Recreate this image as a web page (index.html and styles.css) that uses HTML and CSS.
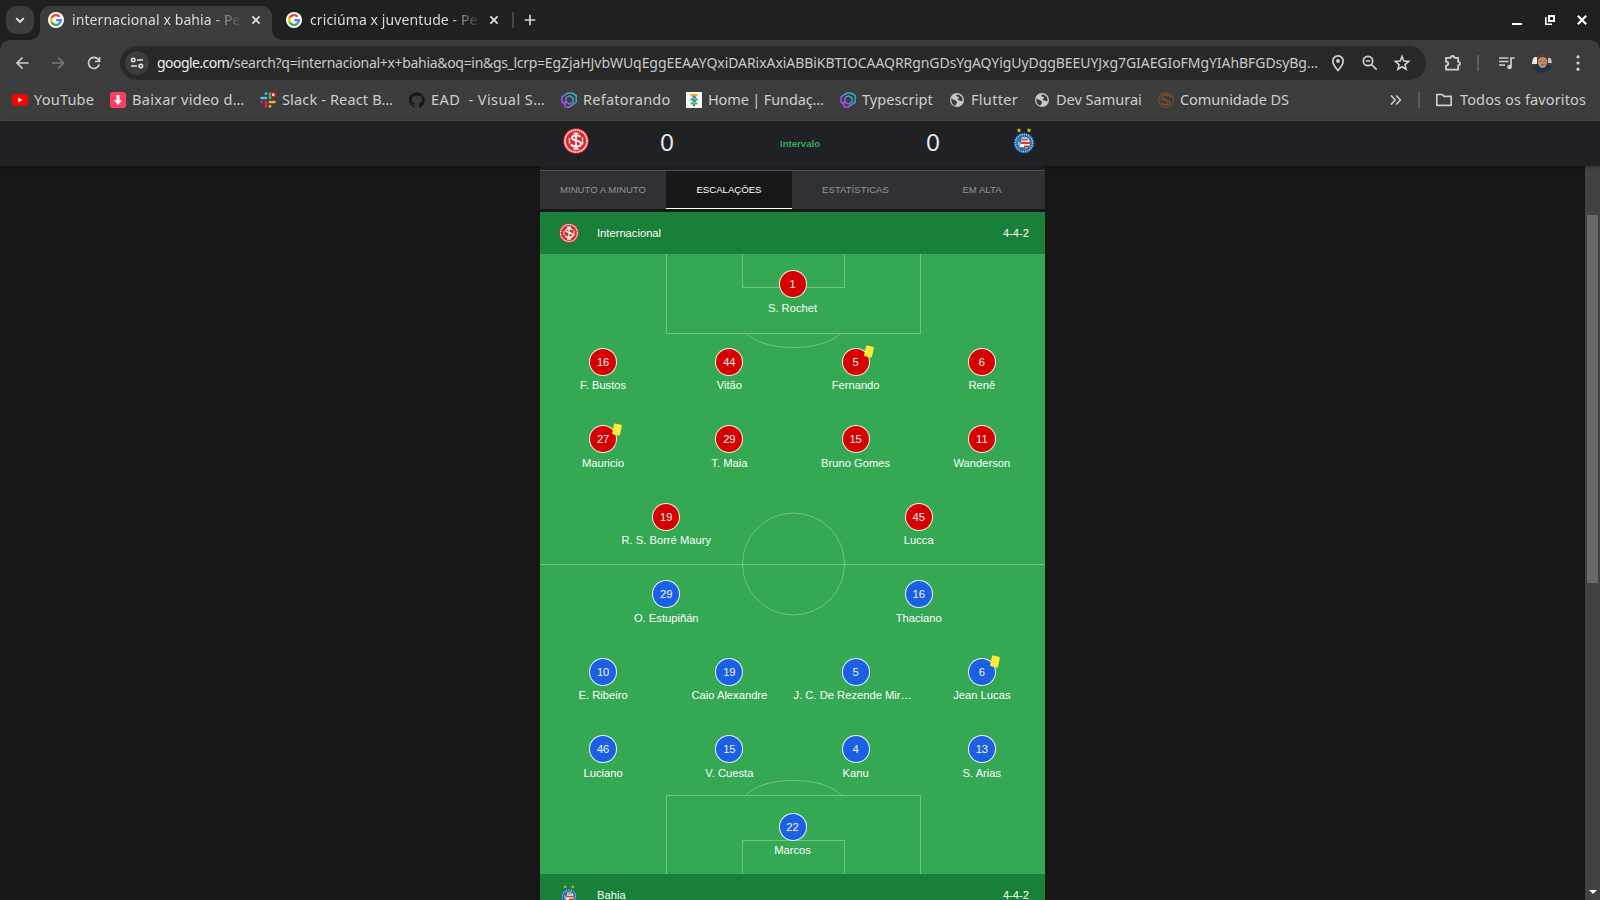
FILE: index.html
```html
<!DOCTYPE html>
<html lang="pt-BR">
<head>
<meta charset="utf-8">
<title>internacional x bahia</title>
<link rel="stylesheet" href="styles.css">
</head>
<body>
<svg class="defs" width="0" height="0">
  <symbol id="google" viewBox="0 0 16 16"><circle cx="8" cy="8" r="8" fill="#fff"/><g fill="none" stroke-width="2.3"><path d="M11.6 4.7A4.9 4.9 0 0 0 3.6 5.8" stroke="#ea4335"/><path d="M3.6 5.8a4.9 4.9 0 0 0 0 4.4" stroke="#fbbc05"/><path d="M3.6 10.2a4.9 4.9 0 0 0 7.7 1.4" stroke="#34a853"/><path d="M11.3 11.6A4.8 4.8 0 0 0 12.9 8.1H8.2" stroke="#4285f4"/></g></symbol>
  <symbol id="close" viewBox="0 0 16 16"><path d="M4.4 4.4l7.2 7.2M11.6 4.4l-7.2 7.2" stroke="currentColor" stroke-width="1.8" fill="none"/></symbol>
  <symbol id="hex" viewBox="0 0 16 16"><linearGradient id="hg" x1="1" y1="0" x2="0" y2="1"><stop offset="0" stop-color="#10c8b8"/><stop offset=".5" stop-color="#5a86dc"/><stop offset="1" stop-color="#d032f0"/></linearGradient><g fill="none" stroke="url(#hg)" stroke-width="1.5" stroke-linejoin="round"><path d="M4 12.2L1 10.300V4.800L7 1h4l4.200 2.600v6.600L11 13.400"/><path d="M5 5.600l3.500-1.700 3.500 2v4.200l-3.500 2-3.500-2z"/><path d="M4 9v5.800l4 .5 3-2.500"/></g></symbol>
  <symbol id="globe" viewBox="0 0 16 16"><circle cx="8" cy="8" r="7" fill="#c4c7c9"/><path d="M2.500 6.200c1.500 2 3.200 1 4 2.200s1.500.6 1.500 2-1.500 1-1.500 3.400C3.500 13 1.800 10 2.500 6.200zM7.500 2.600c-.5 1.800 1 2.600 2.400 2.200.6 1.800-2 2.400-.6 3.400 2 0 2.400 1.200 4.200.8.600-3-1.500-6.300-6-6.400z" fill="#3c3c3c"/></symbol>
  <symbol id="inter" viewBox="0 0 26 26"><circle cx="13" cy="13" r="12.700" fill="#e8262d"/><circle cx="13" cy="13" r="11" fill="none" stroke="#fff" stroke-width="1.600" stroke-dasharray="1.500 .6"/><circle cx="13" cy="13" r="9.300" fill="#e5232b"/><g fill="none" stroke="#fff"><path d="M13 4.500v17M10.500 5.500h5M10.500 20.800h5" stroke-width="1.700"/><path d="M17.500 9c-1-2-8.500-2.300-8.500.8 0 3.600 9 2 9 6 0 3.800-8.500 3.500-10 .5" stroke-width="2"/><path d="M6.500 10v5.500M19.500 9.500v7" stroke-width="1.400"/></g></symbol>
  <symbol id="bahia" viewBox="0 0 22 26"><path d="M6 0l.7 1.600h1.700L7.100 2.700l.5 1.800L6 3.500l-1.600 1 .5-1.800L3.600 1.600h1.700zM16 0l.7 1.600h1.700l-1.300 1.100.5 1.800-1.600-1-1.600 1 .5-1.800-1.300-1.100h1.700z" fill="#f6b52c"/><circle cx="11" cy="15" r="10.300" fill="#1764a5"/><circle cx="11" cy="15" r="8.500" fill="none" stroke="#b9d4e8" stroke-width="1.500" stroke-dasharray="1.200 1"/><circle cx="11" cy="15" r="6.500" fill="#7fb0d2"/><path d="M8.500 10.500h7l1.500 8.500H7z" fill="#fff"/><path d="M9 11h6v1.400H9zM7.500 14h9.500v2H7.500zM11 17.600h6v1.800h-6z" fill="#e1392e"/><path d="M5.500 10h3v4h-3zM7 19.500h5V21H7z" fill="#2871ad"/></symbol>
</svg>

<header class="tabstrip">
  <div class="tabsearch"><svg width="16" height="16" viewBox="0 0 16 16"><path d="M4.200 6.200L8 10l3.800-3.800" fill="none" stroke="#e8e8e8" stroke-width="1.900"/></svg></div>
  <div class="tab tab-active"><svg class="ic16"><use href="#google"/></svg><span class="tab-title">internacional x bahia - Pe</span><svg class="ic16 x"><use href="#close"/></svg></div>
  <div class="tab"><svg class="ic16"><use href="#google"/></svg><span class="tab-title">criciúma x juventude - Pe</span><svg class="ic16 x"><use href="#close"/></svg></div>
  <i class="tab-sep"></i>
  <svg class="newtab" width="16" height="16" viewBox="0 0 16 16"><path d="M8 2.700v10.600M2.700 8h10.600" stroke="#d2d2d2" stroke-width="1.700"/></svg>
  <div class="winctl">
    <svg width="12" height="16" viewBox="0 0 12 16"><path d="M1 12h10" stroke="#fff" stroke-width="2"/></svg>
    <svg width="12" height="16" viewBox="0 0 12 16"><path d="M5 4h5v5H5z" fill="none" stroke="#fff" stroke-width="2"/><path d="M1.800 5v7.200H8" fill="none" stroke="#fff" stroke-width="1.600"/></svg>
    <svg width="12" height="16" viewBox="0 0 12 16"><path d="M1.800 3.800l8.400 8.400M10.200 3.800l-8.400 8.400" stroke="#fff" stroke-width="2.200"/></svg>
  </div>
</header>

<nav class="toolbar">
  <div class="navbtns">
    <svg width="20" height="20" viewBox="0 0 20 20"><path d="M16.500 10H5.500M10.500 4.500L5 10l5.500 5.500" fill="none" stroke="#d0d0d0" stroke-width="1.700"/></svg>
    <svg width="20" height="20" viewBox="0 0 20 20"><path d="M4 10h11M10 4.500l5.500 5.500-5.500 5.500" fill="none" stroke="#777" stroke-width="1.700"/></svg>
    <svg width="20" height="20" viewBox="0 0 20 20"><path d="M15.200 11.500A5.500 5.500 0 1 1 14.200 6.500L15.300 8" fill="none" stroke="#d0d0d0" stroke-width="1.700"/><path d="M15.500 4v4.500H11" fill="none" stroke="#d0d0d0" stroke-width="1.700"/></svg>
  </div>
  <div class="omnibox">
    <span class="tune"><svg width="16" height="16" viewBox="0 0 16 16"><g fill="none" stroke="#e3e3e3" stroke-width="1.600"><circle cx="4.200" cy="5" r="1.700"/><path d="M8 5h6M2 11h6"/><circle cx="11.800" cy="11" r="1.700"/></g></svg></span>
    <span class="url"><span class="host">google.com</span><span class="path">/search?q=internacional+x+bahia&amp;oq=in&amp;gs_lcrp=</span>EgZjaHJvbWUqEggEEAAYQxiDARixAxiABBiKBTIOCAAQRRgnGDsYgAQYigUyDggBEEUYJxg7GIAEGIoFMgYIAhBFGDsyBg…</span>
    <span class="omni-icons">
      <svg width="20" height="20" viewBox="0 0 20 20"><path d="M10 17.500C6.500 13.500 4.800 11 4.800 8a5.200 5.200 0 0 1 10.400 0c0 3-1.700 5.500-5.200 9.500z" fill="none" stroke="#d0d0d0" stroke-width="1.700"/><circle cx="10" cy="8" r="1.900" fill="#d0d0d0"/></svg>
      <svg width="20" height="20" viewBox="0 0 20 20"><circle cx="8" cy="8" r="4.700" fill="none" stroke="#d0d0d0" stroke-width="1.700"/><path d="M11.500 11.500l5.200 5.200M5.800 8h4.400" stroke="#d0d0d0" stroke-width="1.700"/></svg>
      <svg width="20" height="20" viewBox="0 0 20 20"><path d="M10 3.500l1.800 4.500 4.900.4-3.700 3.200 1.100 4.700L10 13.800l-4.100 2.500L7 11.600 3.300 8.400 8.200 8z" fill="none" stroke="#d0d0d0" stroke-width="1.600"/></svg>
    </span>
  </div>
  <div class="actions">
    <svg class="a1" width="20" height="20" viewBox="0 0 20 20"><path d="M3 4.800h4.700c0-2.400 3.600-2.400 3.600 0H15.200v4c2.300 0 2.300 3.600 0 3.600v4.300H3v-4c3-.4 3-3.700 0-4z" fill="none" stroke="#d0d0d0" stroke-width="1.800" stroke-linejoin="round"/></svg>
    <i class="vsep"></i>
    <svg class="a2" width="20" height="20" viewBox="0 0 20 20"><path d="M2 5h9.500M2 8.500h9.500M2 12h6M14 14V5h3.500" fill="none" stroke="#d0d0d0" stroke-width="1.700"/><circle cx="12.500" cy="14" r="2.300" fill="#d0d0d0"/></svg>
    <svg class="a3" width="20" height="20" viewBox="0 0 20 20"><clipPath id="av"><circle cx="10" cy="10" r="10"/></clipPath><g clip-path="url(#av)"><path d="M0 0h20v20H0z" fill="#4a3a33"/><path d="M0 4h5v7H0z" fill="#e9eaec"/><path d="M16 5h4v5h-4z" fill="#c9c4be"/><path d="M0 20c0-6 3-9 6-9l4 5 5-5c4 1 5 4 5 9z" fill="#1c3350"/><ellipse cx="10.500" cy="8.800" rx="4.600" ry="6.200" fill="#c08a68"/><path d="M5.700 6C6 1 15 1 15.300 6 13.500 3.500 7.500 3.500 5.700 6z" fill="#4e4038"/><path d="M7.500 8.300h2M11.500 8.300h2M9 12h3.500" stroke="#7d553e"/></g></svg>
    <svg class="a4" width="20" height="20" viewBox="0 0 20 20"><g fill="#d0d0d0"><circle cx="10" cy="3.800" r="1.600"/><circle cx="10" cy="10" r="1.600"/><circle cx="10" cy="16.200" r="1.600"/></g></svg>
  </div>
</nav>

<nav class="bookmarks">
  <a class="bm b1"><svg viewBox="0 0 16 16"><rect y="2.200" width="16" height="11.600" rx="3" fill="#f00"/><path d="M6.300 5.500l4.200 2.500-4.200 2.500z" fill="#fff"/></svg><span>YouTube</span></a>
  <a class="bm b2"><svg viewBox="0 0 16 16"><rect width="16" height="16" rx="2.500" fill="#fd3e63"/><path d="M6.500 3h3v5.200H12L8 13 4 8.200h2.500z" fill="#fff"/></svg><span>Baixar video d…</span></a>
  <a class="bm b3"><svg viewBox="0 0 16 16"><g stroke-width="2.700" stroke-linecap="round"><path d="M6 1.500v.2M1.500 6H6" stroke="#36c5f0"/><path d="M10 1.500V6" stroke="#2eb67d"/><path d="M10 10h4.500M10 14v.4" stroke="#ecb22e"/><path d="M6 10v4.500M1.500 10h.2" stroke="#e01e5a"/></g><circle cx="13.300" cy="2.700" r="2.700" fill="#e8121d"/><circle cx="13.300" cy="2.700" r="1.300" fill="#fff"/></svg><span>Slack - React B…</span></a>
  <a class="bm b4"><svg viewBox="0 0 16 16"><path d="M8 .2a8 8 0 0 0-2.500 15.600c.4.100.5-.2.500-.4v-1.500c-2.200.5-2.700-1-2.700-1-.4-.9-.9-1.200-.9-1.200-.7-.5.100-.5.100-.5.800.1 1.200.8 1.200.8.700 1.300 1.900.9 2.300.7.100-.5.300-.9.500-1.100-1.800-.2-3.600-.9-3.600-4 0-.9.300-1.600.8-2.100-.1-.2-.4-1 .1-2.100 0 0 .7-.2 2.200.8a7.600 7.600 0 0 1 4 0c1.500-1 2.200-.8 2.200-.8.400 1.100.200 1.900.1 2.100.5.600.8 1.300.8 2.100 0 3.100-1.900 3.800-3.700 4 .3.300.6.800.6 1.500v2.200c0 .2.100.5.500.4A8 8 0 0 0 8 .2z" fill="#181818"/></svg><span>EAD&nbsp; - Visual S…</span></a>
  <a class="bm b5"><svg><use href="#hex"/></svg><span>Refatorando</span></a>
  <a class="bm b6"><svg viewBox="0 0 16 16"><path d="M0 0h16v16H0z" fill="#f8f8f8"/><path d="M4.500 2h7v2.500h-7z" fill="#f5a81c"/><path d="M4.500 6.200h7v2.600h-7z" fill="#1eabe0"/><path d="M4.500 10.300h7v2.200h-7z" fill="#5cb456"/><path d="M6.500 4.500h3.500v1.200H6.500zM6.500 8.800h3.500v1H6.500zM7 12.500h2V14H7z" fill="#36503c"/></svg><span>Home | Fundaç…</span></a>
  <a class="bm b7"><svg><use href="#hex"/></svg><span>Typescript</span></a>
  <a class="bm b8"><svg><use href="#globe"/></svg><span>Flutter</span></a>
  <a class="bm b9"><svg><use href="#globe"/></svg><span>Dev Samurai</span></a>
  <a class="bm b10"><svg viewBox="0 0 16 16"><g fill="none" stroke="#9c5128"><circle cx="8" cy="8" r="7.500" stroke-width=".8"/><path d="M12.500 5C11 2 4.500 2.500 4.500 5.500s7.500 2 7.500 5-6.500 3.500-8.500.5" stroke-width="1"/><path d="M13.500 6C12 1 3 1.500 3 5.500 3 9 10 8 10 10.500s-4 2-7 .8" stroke-width=".7"/></g></svg><span>Comunidade DS</span></a>
  <svg class="more" viewBox="0 0 12 12"><path d="M1 1.500L5.200 6 1 10.500M6.200 1.500L10.400 6l-4.200 4.500" fill="none" stroke="#d0d0d0" stroke-width="1.600"/></svg>
  <i class="vsep"></i>
  <a class="bm all"><svg viewBox="0 0 16 16"><path d="M.8 2.500h5.400L8 4.400h7.200v9H.8z" fill="none" stroke="#d0d0d0" stroke-width="1.600" stroke-linejoin="round"/></svg><span>Todos os favoritos</span></a>
</nav>

<section class="scorebar">
  <div class="score">
    <svg class="sc-inter"><use href="#inter"/></svg><span class="num">0</span><span class="status">Intervalo</span><span class="num">0</span><svg class="sc-bahia"><use href="#bahia"/></svg>
  </div>
</section>

<div class="page">
  <main class="card">
    <div class="tabs"><span>MINUTO A MINUTO</span><span class="on">ESCALAÇÕES</span><span>ESTATÍSTICAS</span><span>EM ALTA</span></div>
    <div class="band"><svg class="crest"><use href="#inter"/></svg><span>Internacional</span><span class="formation">4-4-2</span></div>
    <div class="pitch">
      <svg class="lines" viewBox="0 0 505 620"><g fill="none" stroke="#fff" stroke-opacity=".3"><path d="M126.500 0v79.500h254V0M202.500 0v33.500h102V0M0 310.500h505M126.500 620v-78.500h254V620M202.500 620v-33.500h102V620"/><circle cx="253.500" cy="310" r="51"/><path d="M207 80c10 9 27 13.500 46.500 13.500S290 89 300 80M206 541c10-10 27-14.500 47.500-14.500S291 531 301 541"/></g></svg>
      <div class="row"><div class="p"><b>1</b><span>S. Rochet</span></div></div>
      <div class="row"><div class="p"><b>16</b><span>F. Bustos</span></div><div class="p"><b>44</b><span>Vitão</span></div><div class="p"><b class="yc">5</b><span>Fernando</span></div><div class="p"><b>6</b><span>Renê</span></div></div>
      <div class="row"><div class="p"><b class="yc">27</b><span>Mauricio</span></div><div class="p"><b>29</b><span>T. Maia</span></div><div class="p"><b>15</b><span>Bruno Gomes</span></div><div class="p"><b>11</b><span>Wanderson</span></div></div>
      <div class="row"><div class="p"><b>19</b><span>R. S. Borré Maury</span></div><div class="p"><b>45</b><span>Lucca</span></div></div>
      <div class="row away"><div class="p"><b>29</b><span>O. Estupiñán</span></div><div class="p"><b>16</b><span>Thaciano</span></div></div>
      <div class="row away"><div class="p"><b>10</b><span>E. Ribeiro</span></div><div class="p"><b>19</b><span>Caio Alexandre</span></div><div class="p"><b>5</b><span class="long">J. C. De Rezende Mir…</span></div><div class="p"><b class="yc">6</b><span>Jean Lucas</span></div></div>
      <div class="row away"><div class="p"><b>46</b><span>Luciano</span></div><div class="p"><b>15</b><span>V. Cuesta</span></div><div class="p"><b>4</b><span>Kanu</span></div><div class="p"><b>13</b><span>S. Arias</span></div></div>
      <div class="row away"><div class="p"><b>22</b><span>Marcos</span></div></div>
    </div>
    <div class="band"><svg class="crest"><use href="#bahia"/></svg><span>Bahia</span><span class="formation">4-4-2</span></div>
  </main>
  <aside class="scrollbar"><i class="thumb"></i><i class="down"></i></aside>
</div>
</body>
</html>
```

FILE: styles.css
```css
* { box-sizing: border-box; }
body { margin: 0; width: 1600px; height: 900px; overflow: hidden; background: #171717; color: #fff; font-family: "Liberation Sans", Arial, sans-serif; display: flex; flex-direction: column; }
svg { flex: none; display: block; }
.defs { position: absolute; }
.ic16 { width: 16px; height: 16px; }

/* browser chrome */
.tabstrip, .toolbar, .bookmarks { font-family: "Noto Sans", "Open Sans", sans-serif; flex: none; }
.tabstrip { position: relative; z-index: 1; height: 40px; background: #1f2020; display: flex; align-items: center; padding: 0 6px; }
.tabsearch { width: 28px; height: 28px; border-radius: 10px; background: #3c3c3c; display: flex; align-items: center; justify-content: center; margin-right: 6px; }
.tab { position: relative; width: 232px; height: 34px; margin-top: 6px; padding: 0 8px 6px; display: flex; align-items: center; color: #dadada; }
.tab + .tab { margin-left: 6px; }
.tab-active { background: #3c3c3c; border-radius: 10px 10px 0 0; }
.tab-active::before, .tab-active::after { content: ""; position: absolute; bottom: 0; width: 10px; height: 10px; }
.tab-active::before { left: -10px; background: radial-gradient(circle at 0 0, transparent 9.500px, #3c3c3c 10px); }
.tab-active::after { right: -10px; background: radial-gradient(circle at 100% 0, transparent 9.500px, #3c3c3c 10px); }
.tab-title { width: 168px; margin-left: 8px; font-size: 14px; letter-spacing: .1px; line-height: 20px; white-space: nowrap; -webkit-mask-image: linear-gradient(90deg, #000 138px, transparent 172px); mask-image: linear-gradient(90deg, #000 138px, transparent 172px); }
.x { margin-left: 8px; color: #dedede; }
.tab-sep { width: 2px; height: 16px; background: #454646; margin-left: 2px; }
.newtab { margin-left: 8px; }
.winctl { margin-left: auto; display: flex; gap: 20.500px; padding-right: 6px; }

.toolbar { height: 42px; background: #3c3c3c; border-radius: 10px 10px 0 0; box-shadow: 0 -10px 0 #1f2020; display: flex; align-items: center; padding: 4px 12px 0; }
.navbtns { display: flex; gap: 16px; width: 108px; }
.omnibox { width: 1306px; height: 34px; border-radius: 17px; background: #282828; display: flex; align-items: center; padding: 0 14px 0 5px; }
.tune { width: 24px; height: 24px; border-radius: 50%; background: #3c3c3c; display: flex; align-items: center; justify-content: center; }
.url { width: 1166px; margin-left: 8px; font-size: 14px; letter-spacing: -.06px; line-height: 20px; color: #c9c9c9; white-space: nowrap; }
.host { letter-spacing: -.55px; color: #ededed; }
.path { letter-spacing: -.31px; }
.omni-icons { display: flex; gap: 12px; margin-left: 5px; }
.actions { display: flex; align-items: center; margin-left: 17px; }
.vsep { width: 2px; height: 16px; background: #5c5c5c; }
.a1 { margin-right: 14px; }
.a2 { margin-left: 18px; }
.a3 { margin-left: 15px; }
.a4 { margin-left: 16px; }

.bookmarks { height: 39px; background: #3c3c3c; border-bottom: 1px solid #4b4b4b; display: flex; align-items: center; padding: 0 0 2px 12px; }
.bm { display: flex; align-items: center; gap: 6px; font-size: 14.500px; line-height: 20px; color: #cecece; white-space: nowrap; flex: none; }
.bm span { margin-top: -2px; }
.bm svg { width: 16px; height: 16px; }
.b1 { width: 98px; letter-spacing: .22px; }
.b2 { width: 150px; letter-spacing: .3px; }
.b3 { width: 149px; letter-spacing: .15px; }
.b4 { width: 152px; letter-spacing: .42px; }
.b5 { width: 125px; letter-spacing: .25px; }
.b6 { width: 154px; letter-spacing: -.13px; }
.b7 { width: 109px; letter-spacing: .07px; }
.b8 { width: 85px; letter-spacing: .3px; }
.b9 { width: 124px; }
.b10 { width: 232px; letter-spacing: -.05px; }
.more { width: 12px; height: 12px; margin-right: 16px; }
.all { gap: 8px; margin-left: 16px; letter-spacing: .13px; }

/* match header */
.scorebar { position: relative; z-index: 2; flex: none; height: 45px; background: #202124; box-shadow: 0 1px 4px rgba(0,0,0,.35); }
.score { height: 45px; margin-left: 563px; display: flex; align-items: center; }
.sc-inter { width: 26px; height: 26px; margin: 0 68px 5px 0; }
.sc-bahia { width: 22px; height: 26px; margin: 0 0 5px 70px; }
.num { font: 22.400px/30px Lato, "Noto Sans", sans-serif; color: #e8eaed; width: 20px; text-align: center; margin-bottom: 1px; }
.status { font-size: 9.600px; font-weight: 700; color: #34a853; width: 60px; margin: 0 93px; text-align: center; }

/* lineups */
.page { flex: 1; display: flex; min-height: 0; }
.card { width: 505px; margin-left: 540px; flex: none; height: 734px; overflow: hidden; font-size: 11.200px; }
.tabs { display: grid; grid-template-columns: 126px 126px 127px 126px; height: 43px; border-top: 4px solid #202124; background: #303134; box-shadow: inset 0 1px #505256; font-size: 9.600px; color: #929497; text-align: center; line-height: 39px; }
.on { margin-top: 1px; line-height: 37px; background: #171717; color: #fff; border-bottom: 1px solid #fff; }
.band { height: 42px; background: #188038; display: flex; align-items: center; padding: 0 16px 0 18.500px; }
.tabs + .band { margin-top: 3px; }
.crest { width: 20px; height: 20px; margin-right: 18.500px; opacity: .92; }
.formation { margin-left: auto; }
.pitch { position: relative; height: 620px; background: #34a853; display: flex; flex-direction: column; }
.lines { position: absolute; inset: 0; width: 505px; height: 620px; }
.row { flex: 1; display: flex; justify-content: space-around; }
.p { position: relative; flex: 1; padding-top: 16.400px; display: flex; flex-direction: column; align-items: center; line-height: 13px; white-space: nowrap; }
.p b { position: relative; width: 28px; height: 28px; border: 1.500px solid rgba(255,255,255,.9); border-radius: 50%; background: #d50000; font-weight: 400; line-height: 26px; text-align: center; margin-bottom: 3.400px; color: #f3f3f3; }
.away b { background: #1b60e3; }
.long { margin-left: -6px; }
.yc::after { content: ""; position: absolute; right: -4.500px; top: -2.500px; width: 8px; height: 11px; border-radius: 1px; background: #ffeb3b; transform: rotate(12deg); }

.scrollbar { width: 15px; margin-left: auto; background: #424242; padding: 49px 2px 6px; display: flex; flex-direction: column; justify-content: space-between; align-items: center; }
.thumb { width: 11px; height: 368px; background: #686868; }
.down { border: 4px solid transparent; border-top-color: #fff; border-bottom: 0; }
```
